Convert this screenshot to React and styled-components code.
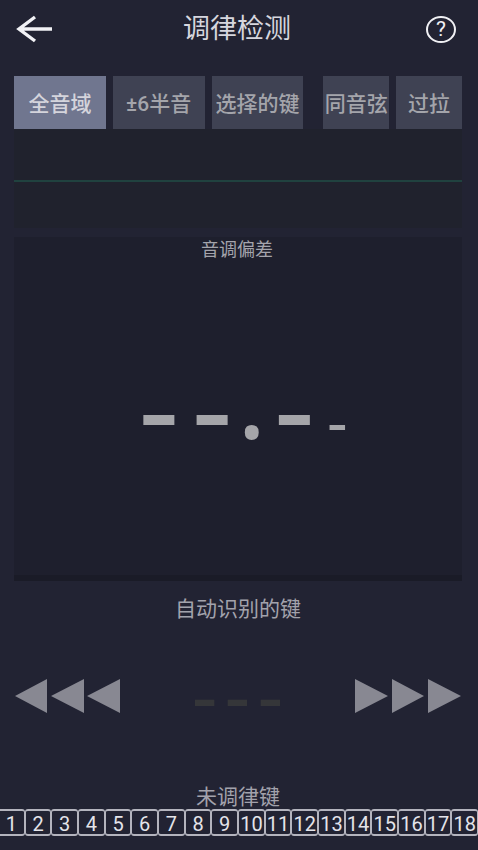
import React, { useState } from 'react'
import styled, { createGlobalStyle } from 'styled-components'

const ranges = ['全音域', '±6半音', '选择的键']
const modes = ['同音弦', '过拉']
const keys = Array.from({ length: 18 }, (_, i) => i + 1)

function App() {
  const [range, setRange] = useState(ranges[0])
  const [mode, setMode] = useState('')

  return (
    <>
      <GlobalStyle />
      <Page>
        <Header>
          <IconButton aria-label="返回">
            <svg width="36" height="28" viewBox="0 0 36 28" fill="none" stroke="#f2f2f6" strokeWidth="3.4">
              <path d="M36 14H3M19 2L3 14L19 26" />
            </svg>
          </IconButton>
          <Title>调律检测</Title>
          <HelpButton aria-label="帮助">?</HelpButton>
        </Header>

        <Tabs>
          <TabGroup $grow={290}>
            {ranges.map(name => (
              <Tab key={name} $active={name === range} onClick={() => setRange(name)}>{name}</Tab>
            ))}
          </TabGroup>
          <TabGroup $grow={139}>
            {modes.map(name => (
              <Tab key={name} $active={name === mode} onClick={() => setMode(name)}>{name}</Tab>
            ))}
          </TabGroup>
        </Tabs>

        <Wave>
          <WaveLine />
        </Wave>

        <Deviation>
          <DeviationTitle>音调偏差</DeviationTitle>
          <Reading>
            <Dash>-</Dash>
            <Dash>-</Dash>
            <Dot>.</Dot>
            <Dash>-</Dash>
            <SmallDash>-</SmallDash>
          </Reading>
        </Deviation>

        <SectionTitle>自动识别的键</SectionTitle>
        <KeyPicker>
          <IconButton aria-label="上一个键">
            <svg width="106" height="36" viewBox="0 0 106 36" fill="#888892">
              <path d="M1 18L33 1V35ZM37 18L70 1V35ZM73 18L106 1V35Z" />
            </svg>
          </IconButton>
          <CurrentKey>
            <span>-</span>
            <span>-</span>
            <span>-</span>
          </CurrentKey>
          <IconButton aria-label="下一个键">
            <svg width="106" height="36" viewBox="0 0 106 36" fill="#888892">
              <path d="M0 1L33 18L0 35ZM37 1L69 18L37 35ZM73 1L106 18L73 35Z" />
            </svg>
          </IconButton>
        </KeyPicker>

        <SectionTitle>未调律键</SectionTitle>
        <KeyStrip>
          {keys.map(n => <KeyCell key={n}>{n}</KeyCell>)}
        </KeyStrip>
      </Page>
    </>
  )
}

const GlobalStyle = createGlobalStyle`
  * {
    box-sizing: border-box;
  }
  body {
    margin: 0;
    background: #222333;
    font-family: Roboto, "Noto Sans CJK SC", sans-serif;
  }
`

const Page = styled.div`
  display: flex;
  flex-direction: column;
  min-height: 100vh;
  overflow: hidden;
`

const Header = styled.header`
  display: flex;
  align-items: center;
  justify-content: space-between;
  height: 58px;
  padding: 0 22px 0 16px;
`

const BaseButton = styled.button`
  padding: 0;
  border: none;
  background: transparent;
  font-family: inherit;
  cursor: pointer;
`

const IconButton = styled(BaseButton)`
  display: flex;
`

const Title = styled.h1`
  margin: 0;
  padding-right: 4px;
  font-size: 27px;
  line-height: 58px;
  font-weight: 400;
  color: #d6d6de;
`

const HelpButton = styled(BaseButton)`
  width: 30px;
  height: 27px;
  border: 2px solid #f0f0f4;
  border-radius: 50%;
  font-size: 21px;
  line-height: 23px;
  color: #f0f0f4;
`

const Tabs = styled.nav`
  display: flex;
  gap: 20px;
  padding: 18px 16px 0 14px;
`

const TabGroup = styled.div`
  display: flex;
  flex: ${({ $grow }) => $grow} 1 0;
  gap: 7px;
`

const Tab = styled(BaseButton)`
  flex: 1 1 0;
  height: 53px;
  padding-bottom: 2px;
  font-size: 21px;
  font-weight: 500;
  white-space: nowrap;
  color: ${({ $active }) => ($active ? '#d4d4dc' : '#a4a5ab')};
  background: ${({ $active }) => ($active ? '#70768f' : '#3f4253')};
`

const Wave = styled.div`
  display: flex;
  align-items: center;
  height: 99px;
  margin: 0 16px 0 14px;
  padding-top: 4px;
  background: #20222d;
`

const WaveLine = styled.div`
  flex: 1;
  height: 2px;
  background: #20423f;
`

const Deviation = styled.section`
  display: flex;
  flex-direction: column;
  height: 344px;
  margin: 9px 16px 0 14px;
  background: #1e1f2d;
  border-bottom: 6px solid #1a1b27;
`

const DeviationTitle = styled.h2`
  margin: 0;
  padding-right: 2px;
  font-size: 18px;
  line-height: 26px;
  font-weight: 400;
  text-align: center;
  color: #a4a4ac;
`

const Reading = styled.div`
  display: flex;
  flex: 1;
  align-items: center;
  justify-content: center;
  gap: 12px;
  padding: 0 0 28px 10px;
  font-family: "Noto Sans", sans-serif;
  line-height: 120px;
  color: #a5a5a9;
`

const Dash = styled.span`
  font-size: 128px;
`

const Dot = styled.span`
  margin: 0 -5px 0 -8px;
  padding-bottom: 20px;
  font-size: 112px;
`

const SmallDash = styled.span`
  padding-top: 32px;
  font-size: 64px;
`

const SectionTitle = styled.h2`
  margin: 0;
  padding: 12px 2px 0 0;
  font-size: 21px;
  line-height: 32px;
  font-weight: 400;
  text-align: center;
  color: #a2a2ac;
`

const KeyPicker = styled.div`
  display: flex;
  align-items: center;
  justify-content: space-between;
  height: 144px;
  padding: 0 17px 2px 14px;
`

const CurrentKey = styled.div`
  display: flex;
  gap: 7px;
  padding-bottom: 6px;
  font-family: "Noto Sans", sans-serif;
  font-size: 80px;
  line-height: 80px;
  color: #353639;
`

const KeyStrip = styled.div`
  display: flex;
  margin: -4px 0 0 -2px;
`

const KeyCell = styled.div`
  display: flex;
  flex: 1 1 0;
  justify-content: center;
  min-width: 0;
  height: 27px;
  border: 2px solid #b4b4be;
  border-left-width: 1px;
  border-right-width: 1px;
  border-radius: 3px;
  font-size: 20px;
  line-height: 26px;
  color: #e4e4ea;
`

export default App
